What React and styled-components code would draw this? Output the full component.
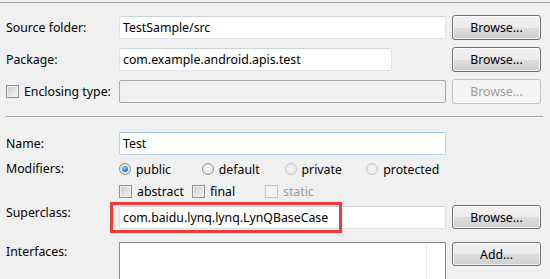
import React from 'react';
import styled, { createGlobalStyle, css } from 'styled-components';

const GlobalStyle = createGlobalStyle`
  html, body {
    margin: 0;
    padding: 0;
    background: #f0f0f0;
  }
  body {
    font-family: 'Noto Sans', 'Open Sans', sans-serif;
    font-size: 12.3px;
    color: #000;
    overflow: hidden;
  }
`;

const Page = styled.div`
  width: 550px;
  height: 279px;
  overflow: hidden;
  padding-top: 2px;
  box-sizing: border-box;
`;

const TopRule = styled.div`
  height: 1px;
  background: #a0a0a0;
`;

const Section = styled.div`
  display: flex;
  flex-direction: column;
  gap: 7px;
  padding: 12px 0 0 6px;
`;

const Row = styled.div`
  display: grid;
  grid-template-columns: 107px 327px 89px;
  column-gap: 6px;
  align-items: ${({ $align }) => $align || 'center'};
  height: ${({ $h }) => $h || 25}px;
  padding-top: ${({ $pt }) => $pt || 0}px;
`;

const Label = styled.label`
  display: flex;
  align-items: center;
  gap: 5px;
  white-space: nowrap;
  line-height: 16px;
  ${({ $top }) => $top && css`align-self: start; padding-top: 2px;`}
`;

const Field = styled.div`
  position: relative;
  box-sizing: border-box;
  height: 23px;
  width: ${({ $w }) => ($w ? `${$w}px` : '100%')};
  border: 1px solid #dfe3e8;
  border-top-color: #cdd2d8;
  border-radius: 2px;
  background: #fff;
  padding: 0 3px;
  display: flex;
  align-items: center;
  white-space: nowrap;
  ${({ $disabled }) =>
    $disabled &&
    css`
      background: #f0f0f0;
      border-color: #a9a9a9;
    `}
  ${({ $focused }) =>
    $focused &&
    css`
      border-color: #b4d2ec;
      border-top-color: #9fc4e6;
    `}
`;

const Button = styled.button`
  box-sizing: border-box;
  height: ${({ $h }) => $h || 25}px;
  width: 89px;
  font: inherit;
  color: #000;
  border: 1px solid #707070;
  border-radius: 3px;
  background: linear-gradient(#f2f2f2 0%, #ebebeb 50%, #dddddd 51%, #cfcfcf 100%);
  box-shadow: inset 0 0 0 1px rgba(255, 255, 255, 0.7);
  padding: 0;
  ${({ disabled }) =>
    disabled &&
    css`
      color: #9c9c9c;
      border-color: #c2c2c2;
      background: #f4f4f4;
      box-shadow: none;
    `}
`;

const Separator = styled.div`
  margin: 12px 7px 0 6px;
  height: 1px;
  background: #a0a0a0;
  border-bottom: 1px solid #fff;
`;

const Lower = styled.div`
  display: flex;
  flex-direction: column;
  padding: 13px 0 0 6px;
`;

const Options = styled.div`
  display: flex;
  align-items: center;
`;

const Option = styled.span`
  display: flex;
  align-items: center;
  gap: 5px;
  width: ${({ $w }) => $w}px;
  white-space: nowrap;
  color: ${({ $disabled }) => ($disabled ? '#9a9a9a' : '#000')};
`;

const Radio = styled.span`
  box-sizing: border-box;
  width: 12px;
  height: 12px;
  border-radius: 50%;
  border: 1px solid ${({ $disabled }) => ($disabled ? '#c6c6c6' : '#8e8f8f')};
  background: ${({ $disabled }) =>
    $disabled
      ? 'radial-gradient(circle at 50% 50%, #f4f4f4 0%, #e6e6e6 100%)'
      : 'radial-gradient(circle at 50% 40%, #fdfdfd 0%, #d8d8d8 100%)'};
  display: flex;
  align-items: center;
  justify-content: center;
  flex-shrink: 0;
  &::after {
    content: '';
    display: ${({ $checked }) => ($checked ? 'block' : 'none')};
    width: 6px;
    height: 6px;
    border-radius: 50%;
    background: radial-gradient(circle at 40% 35%, #8fd0ff 0%, #1b6eb8 70%, #0e4c86 100%);
  }
`;

const Check = styled.span`
  box-sizing: border-box;
  width: 13px;
  height: 13px;
  border: 1px solid ${({ $disabled }) => ($disabled ? '#c6c6c6' : '#8e8f8f')};
  background: ${({ $disabled }) =>
    $disabled ? '#f4f4f4' : 'linear-gradient(135deg, #cbcbcb 0%, #f4f4f4 100%)'};
  box-shadow: inset 0 0 0 1px ${({ $disabled }) => ($disabled ? '#f4f4f4' : '#f0f0f0')};
  flex-shrink: 0;
`;

const List = styled.div`
  position: relative;
  box-sizing: border-box;
  height: 60px;
  border: 1px solid #828790;
  border-bottom: none;
  background: #fff;
  &::after {
    content: '';
    position: absolute;
    top: 2px;
    bottom: 0;
    right: 18px;
    width: 1px;
    background: #e3ebf3;
  }
`;

const Highlight = styled.div`
  position: absolute;
  left: -10px;
  top: -5px;
  width: 232px;
  height: 31px;
  box-sizing: border-box;
  border: 3px solid #f23a3a;
  pointer-events: none;
`;

const App = () => (
  <>
    <GlobalStyle />
    <Page>
      <TopRule />
      <Section>
        <Row>
          <Label>Source folder:</Label>
          <Field>TestSample/src</Field>
          <Button>Browse...</Button>
        </Row>
        <Row>
          <Label>Package:</Label>
          <Field $w={273}>com.example.android.apis.test</Field>
          <Button>Browse...</Button>
        </Row>
        <Row>
          <Label>
            <Check />
            Enclosing type:
          </Label>
          <Field $disabled />
          <Button disabled>Browse...</Button>
        </Row>
      </Section>
      <Separator />
      <Lower>
        <Row>
          <Label>Name:</Label>
          <Field $focused>Test</Field>
        </Row>
        <Row $h={26}>
          <Label>Modifiers:</Label>
          <Options>
            <Option $w={83}>
              <Radio $checked />
              public
            </Option>
            <Option $w={83}>
              <Radio />
              default
            </Option>
            <Option $w={82}>
              <Radio $disabled />
              private
            </Option>
            <Option $w={80}>
              <Radio $disabled />
              protected
            </Option>
          </Options>
        </Row>
        <Row $h={18}>
          <span />
          <Options>
            <Option $w={73}>
              <Check />
              abstract
            </Option>
            <Option $w={73}>
              <Check />
              final
            </Option>
            <Option $w={80} $disabled>
              <Check $disabled />
              static
            </Option>
          </Options>
        </Row>
        <Row $h={37} $align="start" $pt={5}>
          <Label>Superclass:</Label>
          <Field style={{ marginTop: 1 }}>
            com.baidu.lynq.lynq.LynQBaseCase
            <Highlight />
          </Field>
          <Button $h={24}>Browse...</Button>
        </Row>
        <Row $h={60} $align="start">
          <Label $top>Interfaces:</Label>
          <List />
          <Button $h={24}>Add...</Button>
        </Row>
      </Lower>
    </Page>
  </>
);

export default App;
